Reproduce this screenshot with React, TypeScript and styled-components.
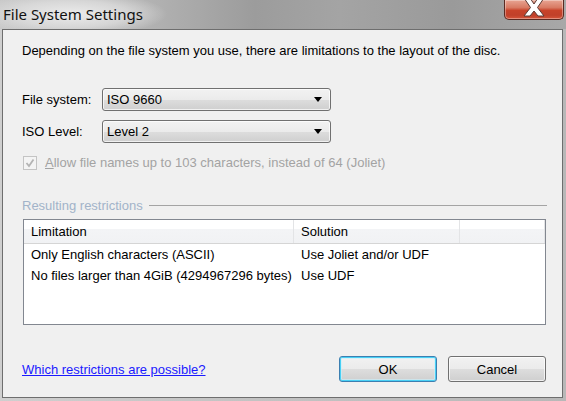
import React from "react";
import styled, { createGlobalStyle } from "styled-components";

const Global = createGlobalStyle`
  html, body { margin: 0; padding: 0; }
  body { width: 566px; height: 401px; overflow: hidden; background: #b4b4b4; }
  * { box-sizing: border-box; }
`;

const Window = styled.div`
  width: 566px;
  height: 401px;
  display: flex;
  flex-direction: column;
  padding: 0 3px 3px 2px;
  background: linear-gradient(90deg, #cfcfcf 0%, #c4c4c4 40%, #b8b8b8 100%);
  font-family: "Liberation Sans", Arial, sans-serif;
  font-size: 13px;
  color: #000;
`;

const TitleBar = styled.div`
  height: 29px;
  margin: 0 -3px 0 -2px;
  display: flex;
  align-items: flex-start;
  background:
    radial-gradient(ellipse 95px 22px at 72px 14px, rgba(238,238,238,0.95) 0%, rgba(225,225,225,0.7) 60%, rgba(200,200,200,0) 100%),
    linear-gradient(90deg, #c8c8c8 0%, #b4b4b4 25%, #9c9c9c 45%, #a4a4a4 60%, #9a9a9a 80%, #a8a8a8 100%);
`;

const Title = styled.div`
  font-family: "Noto Sans", "Open Sans", sans-serif;
  font-size: 15px;
  line-height: 20px;
  padding: 4px 0 0 3px;
  color: #111;
  flex: 1;
`;

const CloseButton = styled.div`
  width: 60px;
  height: 20px;
  margin-right: 2px;
  border: 1px solid #5a2a22;
  border-top: none;
  border-radius: 0 0 5px 5px;
  background: linear-gradient(180deg, #e8a593 0%, #d87a63 40%, #c8432a 55%, #c0402a 80%, #d6553a 100%);
  box-shadow: inset 0 0 0 1px rgba(255,255,255,0.35);
  display: flex;
  align-items: flex-start;
  justify-content: center;
  overflow: hidden;
`;

const Client = styled.div`
  flex: 1;
  border: 1px solid #6e6e6e;
  background: #f0f0f0;
  display: flex;
  flex-direction: column;
  padding: 13px 16px 0 19px;
`;

const Line = styled.div`
  line-height: 15px;
  height: 15px;
  white-space: nowrap;
`;

const FormRow = styled.div<{ $mt: number }>`
  display: flex;
  align-items: center;
  height: 23px;
  margin-top: ${(p) => p.$mt}px;
`;

const Label = styled.div`
  width: 80px;
`;

const Combo = styled.div`
  width: 229px;
  height: 23px;
  border: 1px solid #707070;
  border-radius: 3px;
  background: linear-gradient(180deg, #f2f2f2 0%, #ebebeb 50%, #dddddd 51%, #cfcfcf 100%);
  box-shadow: inset 0 0 0 1px rgba(255,255,255,0.7);
  display: flex;
  align-items: center;
  padding: 0 8px 0 4px;
`;

const ComboText = styled.div`
  flex: 1;
`;

const Arrow = styled.div`
  width: 0;
  height: 0;
  border-left: 4px solid transparent;
  border-right: 4px solid transparent;
  border-top: 5px solid #000;
`;

const CheckRow = styled.div`
  display: flex;
  align-items: center;
  height: 15px;
  margin-top: 12px;
  padding-left: 1px;
  color: #a3a3a3;
`;

const CheckBox = styled.div`
  width: 14px;
  height: 14px;
  border: 1px solid #c4c4c4;
  background: #f4f4f4;
  margin-right: 8px;
  display: flex;
  align-items: center;
  justify-content: center;
`;

const GroupHeader = styled.div`
  display: flex;
  align-items: center;
  height: 15px;
  margin-top: 28px;
  color: #a2b3c9;
`;

const GroupLine = styled.div`
  flex: 1;
  height: 1px;
  margin-left: 6px;
  background: #a4a4a4;
  margin-right: -1px;
`;

const List = styled.div`
  margin: 6px 0 0 1px;
  height: 106px;
  border: 1px solid #828790;
  background: #fff;
  display: flex;
  flex-direction: column;
`;

const HeaderRow = styled.div`
  display: grid;
  grid-template-columns: 270px 166px 1fr;
  height: 24px;
  background: linear-gradient(180deg, #ffffff 0%, #ffffff 40%, #f3f4f6 41%, #f1f2f4 100%);
  border-bottom: 1px solid #d5d5d5;
`;

const HeaderCell = styled.div`
  display: flex;
  align-items: center;
  padding-left: 7px;
  border-right: 1px solid #e3e4e6;
`;

const Row = styled.div`
  display: grid;
  grid-template-columns: 270px 166px 1fr;
  height: 21px;
`;

const Cell = styled.div`
  display: flex;
  align-items: center;
  padding-left: 7px;
  white-space: nowrap;
`;

const Footer = styled.div`
  margin-top: 31px;
  display: flex;
  align-items: center;
  height: 26px;
`;

const Link = styled.a`
  color: #1a1aff;
  text-decoration: underline;
  flex: 1;
  cursor: pointer;
`;

const Button = styled.div<{ $default?: boolean }>`
  width: 98px;
  height: 26px;
  margin-left: ${(p) => (p.$default ? 0 : 11)}px;
  border: 1px solid ${(p) => (p.$default ? "#3c7fb1" : "#707070")};
  border-radius: 3px;
  background: linear-gradient(180deg, #f2f2f2 0%, #ebebeb 50%, #dddddd 51%, #cfcfcf 100%);
  box-shadow: ${(p) =>
    p.$default
      ? "inset 0 0 0 1px #48d0f5, inset 0 0 0 2px rgba(200,240,252,0.6)"
      : "inset 0 0 0 1px rgba(255,255,255,0.7)"};
  display: flex;
  align-items: center;
  justify-content: center;
`;

export default function App() {
  return (
    <>
      <Global />
      <Window>
        <TitleBar>
          <Title>File System Settings</Title>
          <CloseButton>
            <svg width="28" height="18" viewBox="0 0 28 18">
              <path
                d="M4 -2 L10 -2 L14 4 L18 -2 L24 -2 L17.5 7.5 L24 16 L18 16 L14 11 L10 16 L4 16 L10.5 7.5 Z"
                fill="#ffffff"
                stroke="#5b3a34"
                strokeWidth="1"
                strokeLinejoin="round"
              />
            </svg>
          </CloseButton>
        </TitleBar>
        <Client>
          <Line>Depending on the file system you use, there are limitations to the layout of the disc.</Line>
          <FormRow $mt={30}>
            <Label>File system:</Label>
            <Combo>
              <ComboText>ISO 9660</ComboText>
              <Arrow />
            </Combo>
          </FormRow>
          <FormRow $mt={9}>
            <Label>ISO Level:</Label>
            <Combo>
              <ComboText>Level 2</ComboText>
              <Arrow />
            </Combo>
          </FormRow>
          <CheckRow>
            <CheckBox>
              <svg width="10" height="10" viewBox="0 0 10 10">
                <path d="M1.5 5 L4 8 L8.5 1.5" fill="none" stroke="#b4b4b4" strokeWidth="1.8" />
              </svg>
            </CheckBox>
            <span>
              <u>A</u>llow file names up to 103 characters, instead of 64 (Joliet)
            </span>
          </CheckRow>
          <GroupHeader>
            <span>Resulting restrictions</span>
            <GroupLine />
          </GroupHeader>
          <List>
            <HeaderRow>
              <HeaderCell>Limitation</HeaderCell>
              <HeaderCell>Solution</HeaderCell>
              <HeaderCell />
            </HeaderRow>
            <Row>
              <Cell>Only English characters (ASCII)</Cell>
              <Cell>Use Joliet and/or UDF</Cell>
              <Cell />
            </Row>
            <Row>
              <Cell>No files larger than 4GiB (4294967296 bytes)</Cell>
              <Cell>Use UDF</Cell>
              <Cell />
            </Row>
          </List>
          <Footer>
            <Link>Which restrictions are possible?</Link>
            <Button $default>OK</Button>
            <Button>Cancel</Button>
          </Footer>
        </Client>
      </Window>
    </>
  );
}
